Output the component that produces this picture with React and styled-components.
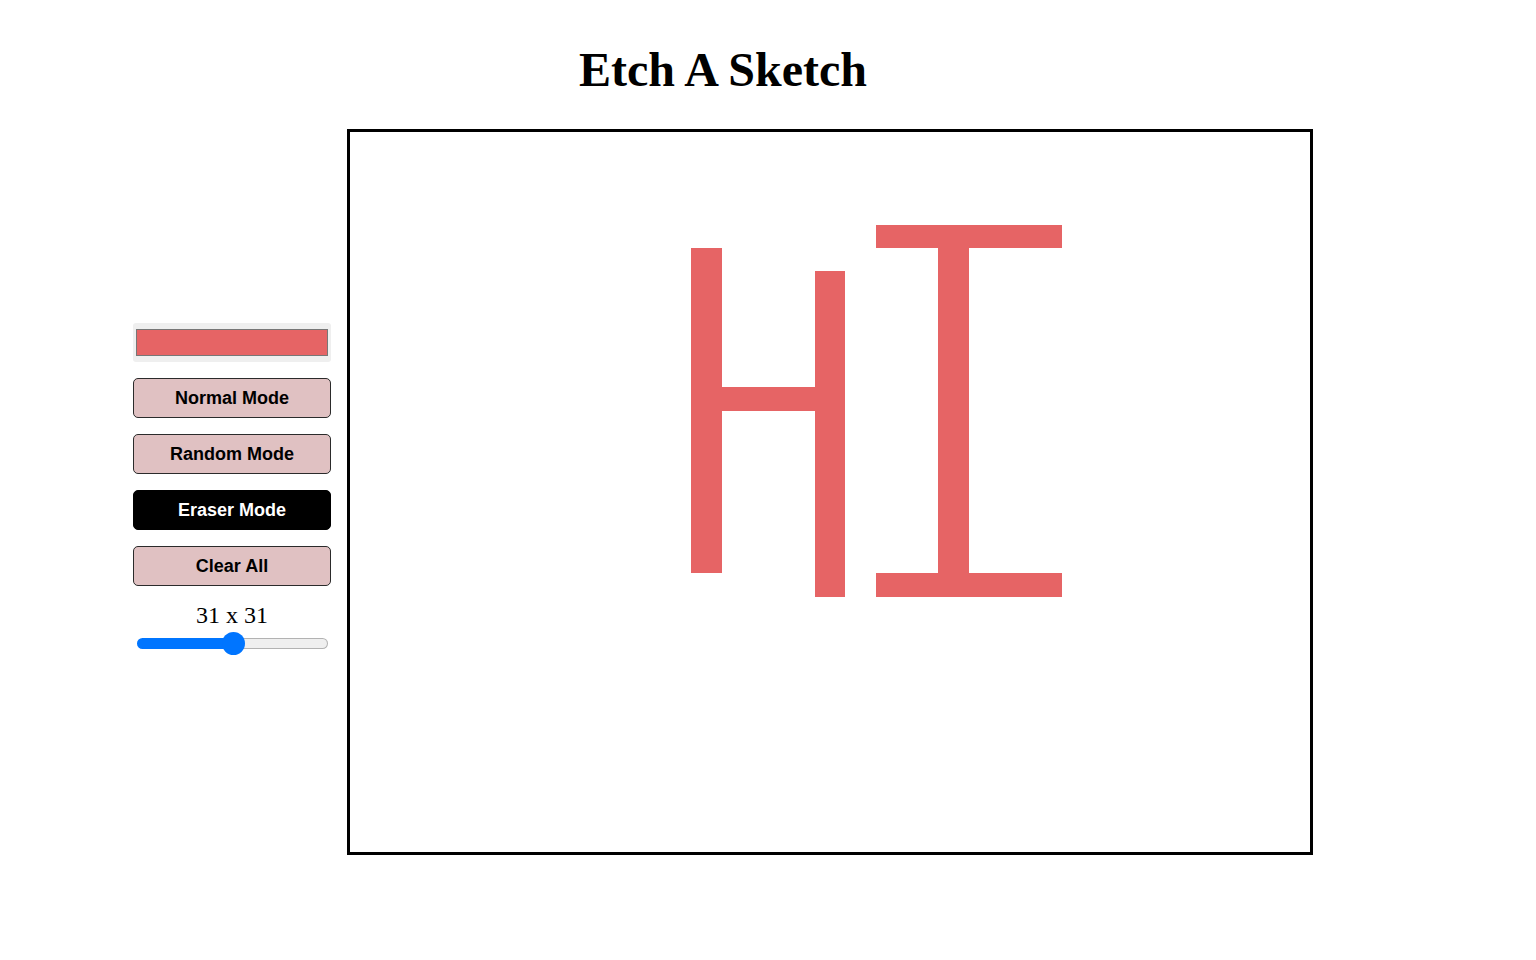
import React, { useState } from "react";
import styled, { createGlobalStyle } from "styled-components";

const GlobalStyle = createGlobalStyle`
  html, body { margin: 0; padding: 0; background: #ffffff; }
  body { font-family: "Liberation Serif", "Times New Roman", serif; color: #000; }
`;

const Page = styled.div`
  width: 1180px;
  margin-left: 133px;
  display: flex;
  flex-direction: column;
  align-items: center;
`;

const Title = styled.h1`
  margin: 46px 0 35px;
  font-family: "Liberation Serif", "Times New Roman", serif;
  font-size: 48px;
  line-height: 48px;
  font-weight: 700;
`;

const Workspace = styled.div`
  display: flex;
  align-items: center;
  gap: 16px;
  width: 100%;
`;

const Controls = styled.div`
  width: 198px;
  display: flex;
  flex-direction: column;
  gap: 16px;
`;

const ColorPicker = styled.input`
  -webkit-appearance: none;
  appearance: none;
  display: block;
  width: 198px;
  height: 39px;
  margin: 0;
  padding: 0;
  border: none;
  border-radius: 3px;
  background: #efefef;
  cursor: pointer;
  &::-webkit-color-swatch-wrapper {
    padding: 6px 3px 6px 3px;
  }
  &::-webkit-color-swatch {
    border: 1px solid #777777;
    border-radius: 0;
  }
`;

const ModeButton = styled.button`
  height: 40px;
  margin: 0;
  padding: 0;
  border: 1px solid ${(p) => (p.$active ? "#000000" : "#2b2b2b")};
  border-radius: 5px;
  background: ${(p) => (p.$active ? "#000000" : "#e0c1c2")};
  color: ${(p) => (p.$active ? "#ffffff" : "#000000")};
  font-family: "Liberation Sans", Arial, sans-serif;
  font-size: 18px;
  font-weight: 700;
  cursor: pointer;
`;

const SizeBox = styled.div`
  display: flex;
  flex-direction: column;
  align-items: center;
`;

const SizeLabel = styled.div`
  font-family: "Liberation Serif", "Times New Roman", serif;
  font-size: 24px;
  line-height: 27px;
`;

const Slider = styled.input`
  -webkit-appearance: none;
  appearance: none;
  width: 191px;
  height: 23px;
  margin: 3px 0 6px;
  padding: 0;
  background: transparent;
  cursor: pointer;
  &::-webkit-slider-runnable-track {
    height: 11px;
    border-radius: 6px;
    border: 1px solid transparent;
    box-sizing: border-box;
    background:
      linear-gradient(to right, #0075ff var(--fill), transparent var(--fill)) border-box,
      linear-gradient(#efefef, #efefef) padding-box,
      linear-gradient(#b2b2b2, #b2b2b2) border-box;
  }
  &::-webkit-slider-thumb {
    -webkit-appearance: none;
    appearance: none;
    width: 23px;
    height: 23px;
    margin-top: -7px;
    border-radius: 50%;
    border: none;
    background: #0075ff;
  }
`;

const Board = styled.div`
  width: 960px;
  height: 720px;
  border: 3px solid #000000;
  display: grid;
  grid-template-columns: repeat(${(p) => p.$size}, 1fr);
  grid-template-rows: repeat(${(p) => p.$size}, 1fr);
  flex-shrink: 0;
`;

const Cell = styled.div`
  background: ${(p) => (p.$on ? "#e66465" : "#ffffff")};
`;

const SIZE = 31;

function buildPainted() {
  const set = new Set();
  const add = (r, c) => set.add(r * SIZE + c);
  for (let r = 5; r <= 18; r++) add(r, 11);
  for (let r = 6; r <= 19; r++) add(r, 15);
  for (let c = 12; c <= 14; c++) add(11, c);
  for (let c = 17; c <= 22; c++) {
    add(4, c);
    add(19, c);
  }
  for (let r = 5; r <= 18; r++) add(r, 19);
  return set;
}

const painted = buildPainted();

export default function App() {
  const [size, setSize] = useState(31);
  const min = 1;
  const max = 60;
  const thumb = 23;
  const width = 191;
  const frac = (size - min) / (max - min);
  const fillPx = thumb / 2 + frac * (width - thumb);
  const cells = [];
  for (let i = 0; i < SIZE * SIZE; i++) {
    cells.push(<Cell key={i} $on={painted.has(i)} />);
  }
  return (
    <>
      <GlobalStyle />
      <Page>
        <Title>Etch A Sketch</Title>
        <Workspace>
          <Controls>
            <ColorPicker type="color" defaultValue="#e66465" />
            <ModeButton>Normal Mode</ModeButton>
            <ModeButton>Random Mode</ModeButton>
            <ModeButton $active>Eraser Mode</ModeButton>
            <ModeButton>Clear All</ModeButton>
            <SizeBox>
              <SizeLabel>
                {size} x {size}
              </SizeLabel>
              <Slider
                type="range"
                min={min}
                max={max}
                value={size}
                onChange={(e) => setSize(Number(e.target.value))}
                style={{ "--fill": `${fillPx}px` }}
              />
            </SizeBox>
          </Controls>
          <Board $size={SIZE}>{cells}</Board>
        </Workspace>
      </Page>
    </>
  );
}
